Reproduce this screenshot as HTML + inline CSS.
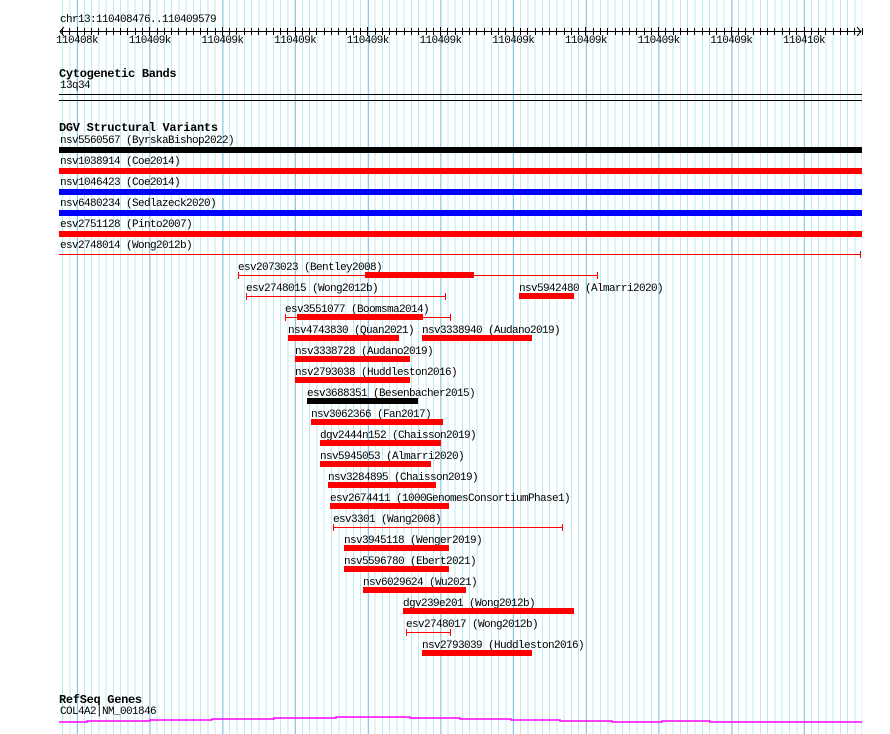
<!DOCTYPE html>
<html><head><style>
body{margin:0;width:890px;height:734px;background:#fff;position:relative;overflow:hidden;font-family:"Liberation Mono","DejaVu Sans Mono",monospace;font-size:11px;letter-spacing:-0.6px;color:#000}
#grid{position:absolute;left:62px;top:0;width:800px;height:734px;
background:
repeating-linear-gradient(to right,#8cc6e8 0 1px,transparent 1px 72.7px) 14.6px 0/800px 734px no-repeat,
repeating-linear-gradient(to right,#b4ecf2 0 1px,transparent 1px 7.27px);}
.t{position:absolute;white-space:nowrap;line-height:11px}
.h{position:absolute;font-weight:bold;font-size:12px;letter-spacing:-0.3px;line-height:12px;white-space:nowrap}
.b{position:absolute;height:6px}
.l{position:absolute;height:1px}
.tk{position:absolute;width:1px;height:7px}
</style></head><body>
<div id="grid"></div>
<div class="t" style="left:60px;top:15px">chr13:110408476..110409579</div>
<svg style="position:absolute;left:0;top:0" width="890" height="50">
<line x1="60" y1="31.5" x2="861" y2="31.5" stroke="#000"/>
<polyline points="64,27 60,31.5 64,36" fill="none" stroke="#000"/>
<polyline points="857,27 861,31.5 857,36" fill="none" stroke="#000"/>
<g stroke="#000" id="ticks"></g>
</svg>
<div id="labels"></div>
<div class="h" style="left:59px;top:68px">Cytogenetic Bands</div>
<div class="t" style="left:60px;top:81px">13q34</div>
<div class="l" style="left:59px;top:94px;width:803px;background:#000"></div>
<div class="l" style="left:59px;top:100px;width:803px;background:#000"></div>
<div class="h" style="left:59px;top:122px">DGV Structural Variants</div>
<div class="t" style="left:60px;top:136px">nsv5560567 (ByrskaBishop2022)</div>
<div class="b" style="left:59px;top:147px;width:803px;background:#000"></div>
<div class="t" style="left:60px;top:157px">nsv1038914 (Coe2014)</div>
<div class="b" style="left:59px;top:168px;width:803px;background:#f00"></div>
<div class="t" style="left:60px;top:178px">nsv1046423 (Coe2014)</div>
<div class="b" style="left:59px;top:189px;width:803px;background:#00f"></div>
<div class="t" style="left:60px;top:199px">nsv6480234 (Sedlazeck2020)</div>
<div class="b" style="left:59px;top:210px;width:803px;background:#00f"></div>
<div class="t" style="left:60px;top:220px">esv2751128 (Pinto2007)</div>
<div class="b" style="left:59px;top:231px;width:803px;background:#f00"></div>
<div class="t" style="left:60px;top:241px">esv2748014 (Wong2012b)</div>
<div class="l" style="left:59px;top:254px;width:802px;background:#f00"></div>
<div class="tk" style="left:860px;top:251px;background:#f00"></div>
<div id="feats"></div>
<div class="h" style="left:59px;top:694px">RefSeq Genes</div>
<div class="t" style="left:60px;top:707px">COL4A2|NM_001846</div>
<svg style="position:absolute;left:0;top:700px" width="890" height="30">
<polyline points="59,22 87,22 87,21 150,21 150,20 212,20 212,19 274,19 274,18 336,18 336,17 410,17 410,18 460,18 460,19 511,19 511,20 560,20 560,21 612,21 612,22 662,22 662,21 710,21 710,22 862,22" fill="none" stroke="#f0f" stroke-width="1.5"/>
</svg>
<script>
var g=document.getElementById('ticks'),s='';
for(var i=0;i<=110;i++){var x=Math.round(62+7.27*i)+.5;var maj=(i%10==2);s+='<line x1="'+x+'" y1="'+(maj?27:28)+'" x2="'+x+'" y2="'+(maj?36:35)+'"/>';}
g.innerHTML=s;
var L=['110408k','110409k','110409k','110409k','110409k','110409k','110409k','110409k','110409k','110409k','110410k'],h='';
for(var i=0;i<11;i++){var c=77+72.7*i;h+='<div class="t" style="left:'+(c-21)+'px;top:36px">'+L[i]+'</div>';}
document.getElementById('labels').innerHTML=h;
var F=[
['esv2073023 (Bentley2008)',238,266,'L',238,598,365,474],
['esv2748015 (Wong2012b)',246,287,'L',246,446],
['nsv5942480 (Almarri2020)',519,287,'B',519,574],
['esv3551077 (Boomsma2014)',285,308,'L',285,451,297,423],
['nsv4743830 (Quan2021)',288,329,'B',288,399],
['nsv3338940 (Audano2019)',422,329,'B',422,532],
['nsv3338728 (Audano2019)',295,350,'B',295,410],
['nsv2793038 (Huddleston2016)',295,371,'B',295,410],
['esv3688351 (Besenbacher2015)',307,392,'K',307,418],
['nsv3062366 (Fan2017)',311,413,'B',311,443],
['dgv2444n152 (Chaisson2019)',320,434,'B',320,441],
['nsv5945053 (Almarri2020)',320,455,'B',320,431],
['nsv3284895 (Chaisson2019)',328,476,'B',328,436],
['esv2674411 (1000GenomesConsortiumPhase1)',330,497,'B',330,449],
['esv3301 (Wang2008)',333,518,'L',333,563],
['nsv3945118 (Wenger2019)',344,539,'B',344,449],
['nsv5596780 (Ebert2021)',344,560,'B',344,449],
['nsv6029624 (Wu2021)',363,581,'B',363,466],
['dgv239e201 (Wong2012b)',403,602,'B',403,574],
['esv2748017 (Wong2012b)',406,623,'L',406,451],
['nsv2793039 (Huddleston2016)',422,644,'B',422,532]];
h='';
F.forEach(function(f){
h+='<div class="t" style="left:'+f[1]+'px;top:'+(f[2]-3)+'px">'+f[0]+'</div>';
var y=f[2]+6;
if(f[3]=='L'){
h+='<div class="l" style="left:'+f[4]+'px;top:'+(y+3)+'px;width:'+(f[5]-f[4])+'px;background:#f00"></div>';
h+='<div class="tk" style="left:'+f[4]+'px;top:'+y+'px;background:#f00"></div><div class="tk" style="left:'+(f[5]-1)+'px;top:'+y+'px;background:#f00"></div>';
if(f[6])h+='<div class="b" style="left:'+f[6]+'px;top:'+y+'px;width:'+(f[7]-f[6])+'px;background:#f00"></div>';
}else{
h+='<div class="b" style="left:'+f[4]+'px;top:'+y+'px;width:'+(f[5]-f[4])+'px;background:'+(f[3]=='K'?'#000':'#f00')+'"></div>';}
});
document.getElementById('feats').innerHTML=h;
</script>
</body></html>
